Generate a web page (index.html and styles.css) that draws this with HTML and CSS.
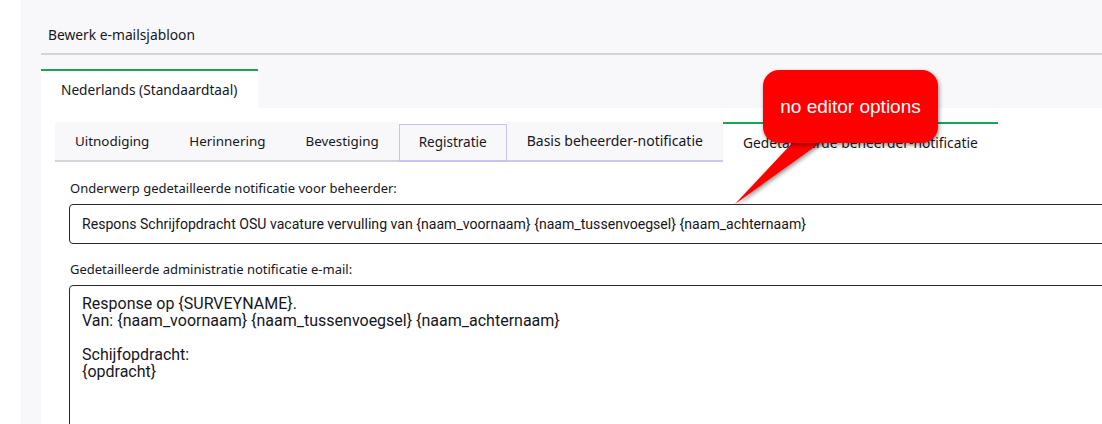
FILE: index.html
```html
<!DOCTYPE html>
<html lang="nl">
<head>
<meta charset="utf-8">
<title>Bewerk e-mailsjabloon</title>
<link rel="stylesheet" href="styles.css">
</head>
<body>
<div class="page">
  <div class="side"></div>
  <div class="main">
    <div class="header">Bewerk e-mailsjabloon</div>
    <div class="lang-tabs">
      <div class="lang-tab">Nederlands (Standaardtaal)</div>
    </div>
    <div class="content">
      <div class="tabs">
        <div class="tab tab-sm">Uitnodiging</div>
        <div class="tab tab-sm">Herinnering</div>
        <div class="tab tab-sm">Bevestiging</div>
        <div class="tab tab-hover">Registratie</div>
        <div class="tab tab-under">Basis beheerder-notificatie</div>
        <div class="tab tab-active">Gedetailleerde beheerder-notificatie</div>
      </div>
      <div class="form">
        <label class="label">Onderwerp gedetailleerde notificatie voor beheerder:</label>
        <div class="input">Respons Schrijfopdracht OSU vacature vervulling van {naam_voornaam} {naam_tussenvoegsel} {naam_achternaam}</div>
        <label class="label label-2">Gedetailleerde administratie notificatie e-mail:</label>
        <div class="textarea">Response op {SURVEYNAME}.<br>Van: {naam_voornaam} {naam_tussenvoegsel} {naam_achternaam}<br><br>Schijfopdracht:<br>{opdracht}</div>
      </div>
    </div>
  </div>
</div>
<div class="callout">
  <svg class="callout-tail" width="120" height="90" viewBox="0 0 120 90">
    <polygon points="66,0 96,0 4,66" fill="#ff0000"/>
  </svg>
  <div class="callout-box">no editor options</div>
</div>
</body>
</html>
```
FILE: styles.css
```css
html, body {
  margin: 0;
  padding: 0;
}
body {
  width: 1102px;
  height: 424px;
  overflow: hidden;
  background: #ffffff;
  font-family: "Noto Sans", "DejaVu Sans", sans-serif;
  color: #161622;
  position: relative;
}
.page {
  display: flex;
  height: 424px;
}
.side {
  width: 21px;
  flex: none;
  background: #ffffff;
}
.main {
  flex: 1;
  background: #f8f8fa;
  padding-left: 20px;
  display: flex;
  flex-direction: column;
  min-width: 0;
}
.header {
  font-size: 13.8px;
  line-height: 16px;
  padding: 27px 0 10px 7px;
  border-bottom: 2px solid #d4d3db;
}
.lang-tabs {
  display: flex;
  margin-top: 14px;
}
.lang-tab {
  width: 217px;
  box-sizing: border-box;
  height: 39px;
  border-top: 2px solid #17a55a;
  background: #ffffff;
  font-size: 13.7px;
  line-height: 37px;
  padding-left: 20px;
}
.content {
  flex: 1;
  background: #ffffff;
  padding: 14px 0 0 14px;
}
.tabs {
  display: flex;
  height: 40px;
}
.tab {
  box-sizing: border-box;
  height: 40px;
  padding: 0 20px;
  font-size: 13.5px;
  line-height: 38px;
  background: #f8f8fa;
  border-bottom: 2px solid #d4d3dd;
  white-space: nowrap;
}
.tab-sm {
  font-size: 13.4px;
}
.tab-hover {
  border: 1px solid #c9c0f5;
  border-bottom: 2px solid #c9c0f5;
  height: 38px;
  margin-top: 2px;
  line-height: 34px;
  padding: 0 19px;
}
.tab-under {
  border-bottom-color: #cfc6ee;
  font-size: 14px;
}
.tab-active {
  background: #ffffff;
  border-top: 2px solid #17a55a;
  border-bottom: none;
  font-size: 13.8px;
}
.form {
  padding: 17px 0 0 14px;
}
.label {
  display: block;
  font-size: 13px;
  line-height: 18px;
  margin-left: 1px;
}
.label-2 {
  margin-top: 16px;
}
.input {
  margin-top: 7px;
  width: 1100px;
  height: 40px;
  box-sizing: border-box;
  border: 1px solid #2b2b2b;
  border-radius: 4px;
  padding: 0 12px;
  font-family: "Roboto", "Noto Sans", sans-serif;
  font-size: 14.1px;
  line-height: 38px;
  white-space: nowrap;
}
.textarea {
  margin-top: 7px;
  width: 1100px;
  height: 200px;
  box-sizing: border-box;
  border: 1px solid #2b2b2b;
  border-radius: 4px;
  padding: 9px 12px;
  font-family: "Roboto", "Noto Sans", sans-serif;
  font-size: 16px;
  line-height: 17px;
  white-space: nowrap;
}
.callout {
  position: absolute;
  left: 731px;
  top: 70px;
  width: 210px;
  height: 140px;
}
.callout-box {
  position: absolute;
  left: 32px;
  top: 0;
  width: 175px;
  height: 73px;
  box-sizing: border-box;
  background: #ff0000;
  border-radius: 16px;
  box-shadow: 1px 2px 4px rgba(0, 0, 0, 0.45);
  color: #ffffff;
  font-family: "Liberation Sans", Arial, sans-serif;
  font-size: 19px;
  line-height: 73px;
  text-align: center;
  padding-bottom: 2px;
}
.callout-tail {
  position: absolute;
  left: 0;
  top: 68px;
  filter: drop-shadow(1px 2px 2px rgba(0, 0, 0, 0.45));
}
```
